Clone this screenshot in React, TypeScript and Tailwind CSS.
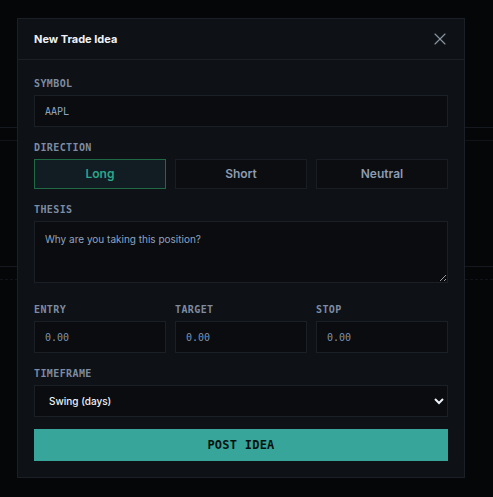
import { X } from "lucide-react";

const mono = "font-['DejaVu_Sans_Mono','Liberation_Mono',monospace]";
const label = `block ${mono} font-bold text-[10px] leading-[14px] tracking-[0.04em] text-[#7d8ca2] mb-1`;
const field =
  "w-full bg-[#0a0c10] border border-[#1b1f26] text-[#8fa3bf] outline-none px-2.5";

const App = () => {
  const direction = "Long";
  return (
    <div className="relative w-[493px] h-[497px] bg-[#050608] overflow-hidden font-['Inter','Liberation_Sans',sans-serif] [color-scheme:dark]">
      {/* page behind the dialog */}
      <div className="pt-[127px]">
        <div className="border-t border-[#15191f] h-[13px]" />
        <div className="border-t border-[#101318] h-[126px]" />
        <div className="border-t border-[#15191f] h-[13px]" />
        <div className="border-t border-dashed border-[#101318]" />
      </div>

      <div className="absolute left-[17px] top-[18px] w-[448px] h-[460px] bg-[#0e1116] border border-[#1b1f26]">
        <div className="flex items-center justify-between h-[41px] px-4 border-b border-[#1b1f26]">
          <h2 className="text-[11px] font-bold text-[#eef2f6]">New Trade Idea</h2>
          <X size={20} strokeWidth={1.4} className="text-[#8a93a0] -mr-0.5" />
        </div>

        <div className="px-4 pt-[17px] flex flex-col gap-[14px]">
          <div>
            <label className={label}>SYMBOL</label>
            <input
              defaultValue="AAPL"
              className={`${field} h-8 ${mono} text-[10px]`}
            />
          </div>

          <div>
            <label className={label}>DIRECTION</label>
            <div className="grid grid-cols-3 gap-[9px]">
              {["Long", "Short", "Neutral"].map((d) => (
                <button
                  key={d}
                  className={
                    d === direction
                      ? "h-[30px] text-[12px] font-semibold bg-[#111d22] border border-[#1f6a45] text-[#2ba58b]"
                      : "h-[30px] text-[12px] font-semibold bg-[#0b0d11] border border-[#1a1e24] text-[#8e9bae]"
                  }
                >
                  {d}
                </button>
              ))}
            </div>
          </div>

          <div>
            <label className={label}>THESIS</label>
            <textarea
              placeholder="Why are you taking this position?"
              className={`${field} block h-[62px] py-2.5 text-[10px] placeholder:text-[#8fa3bf]`}
            />
          </div>

          <div className="grid grid-cols-3 gap-[9px] pt-1.5">
            {["ENTRY", "TARGET", "STOP"].map((l) => (
              <div key={l}>
                <label className={label}>{l}</label>
                <input
                  placeholder="0.00"
                  className={`${field} h-8 ${mono} text-[10px] placeholder:text-[#7f93ae]`}
                />
              </div>
            ))}
          </div>

          <div>
            <label className={label}>TIMEFRAME</label>
            <select className={`${field} h-8 text-[10px] font-medium text-[#eef2f6]`}>
              <option>Swing (days)</option>
              <option>Day trade</option>
              <option>Position (weeks)</option>
            </select>
          </div>

          <button className={`h-8 -mt-0.5 bg-[#37a59a] text-[#071210] ${mono} font-bold text-[12px] tracking-[0.02em]`}>
            POST IDEA
          </button>
        </div>
      </div>
    </div>
  );
};

export default App;
